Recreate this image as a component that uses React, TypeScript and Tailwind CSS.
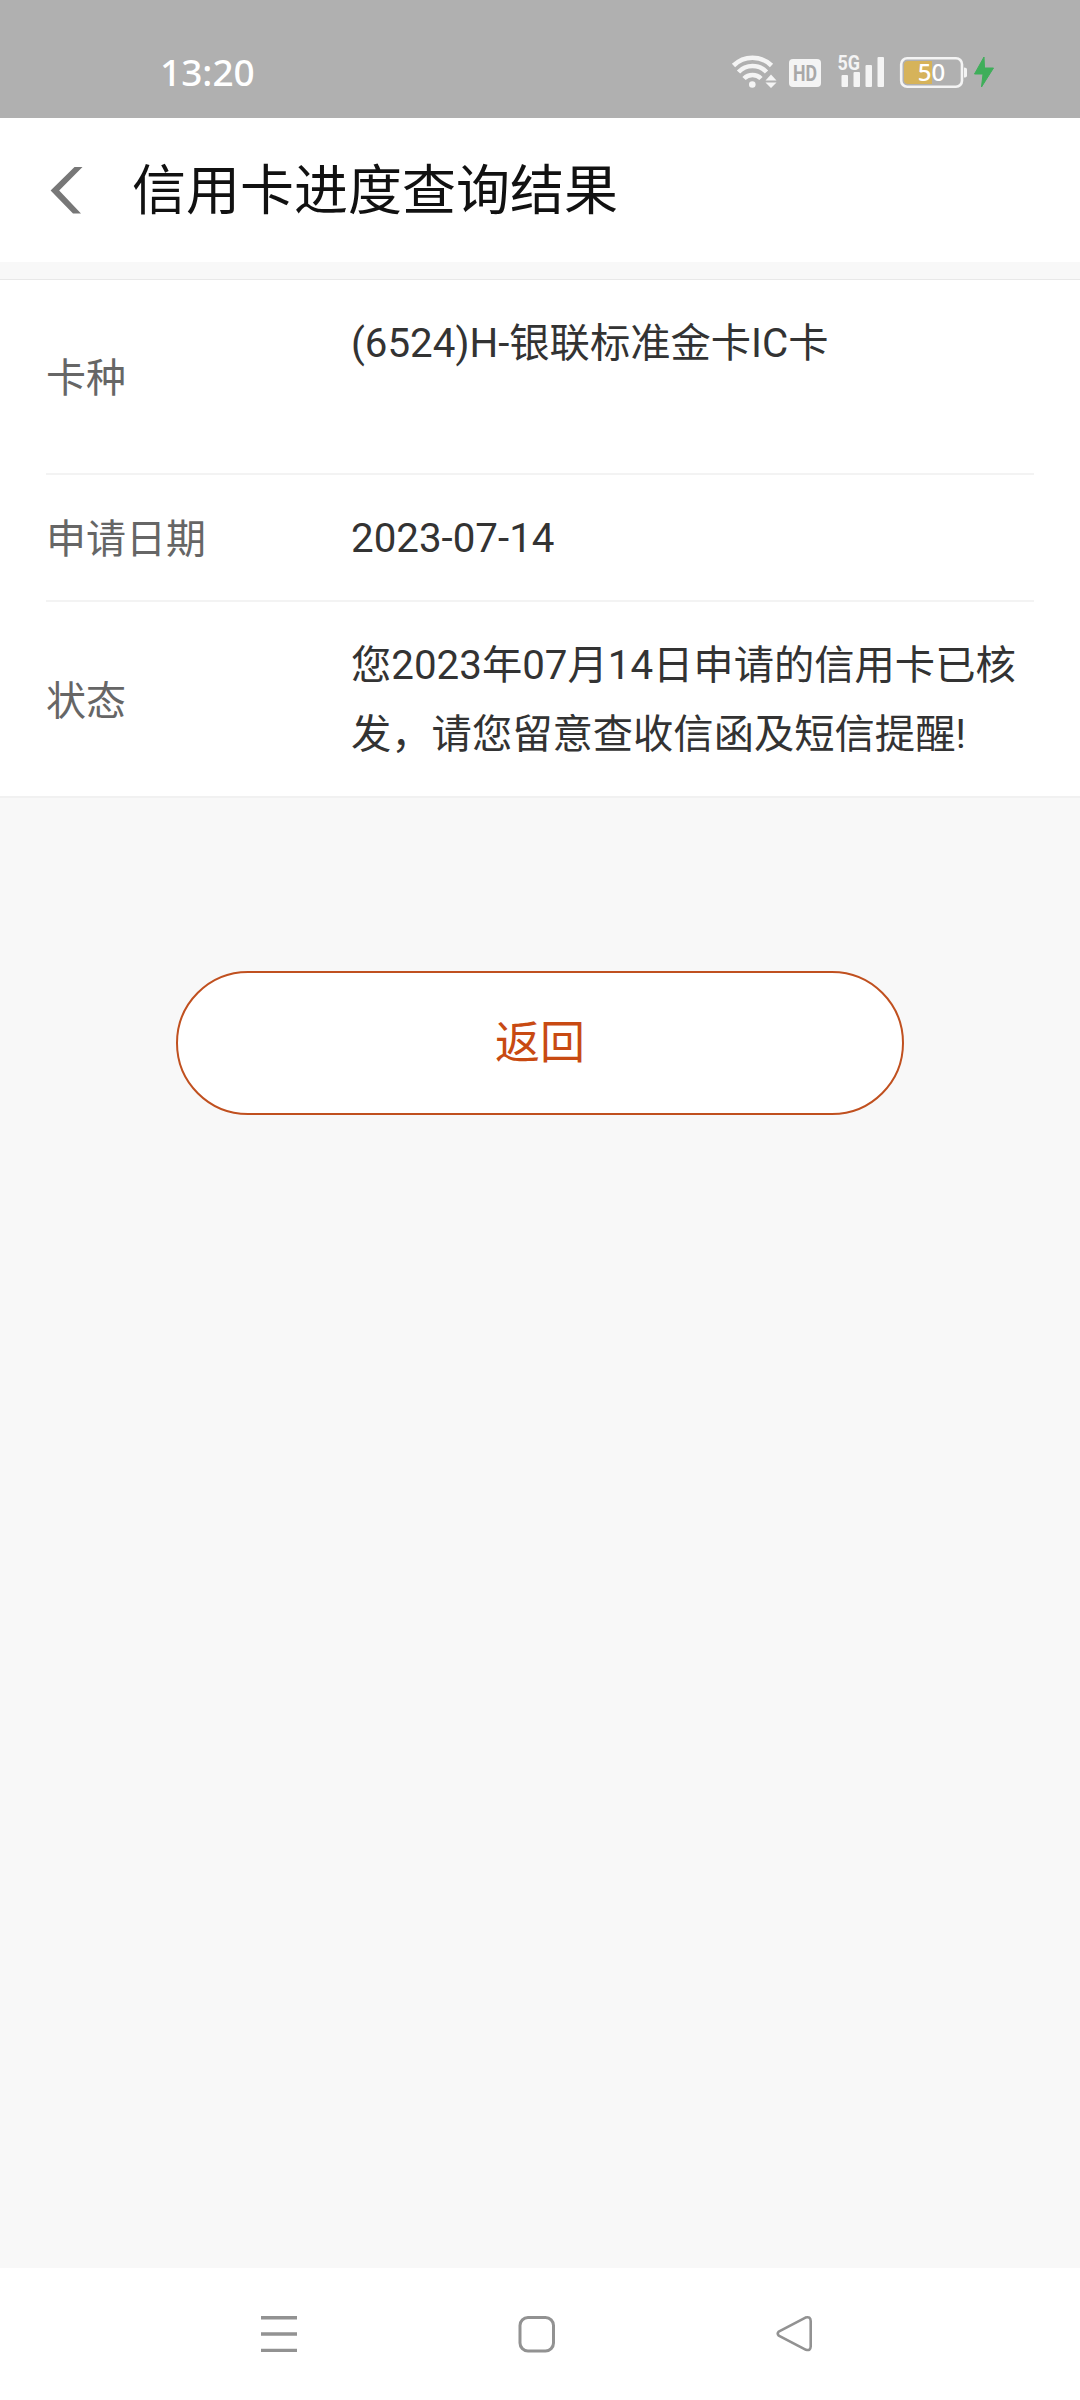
import React from 'react';

const ROWS = [
  { id: 'type', label: '卡种', value: '(6524)H-银联标准金卡IC卡', height: 'h-[195px]' },
  { id: 'date', label: '申请日期', value: '2023-07-14', height: 'h-[127px]' },
  { id: 'status', label: '状态', value: '您2023年07月14日申请的信用卡已核发，请您留意查收信函及短信提醒!', height: 'h-[194px]' },
];

const StatusIcons: React.FC = () => (
  <svg width="300" height="60" viewBox="0 0 300 60" fill="none">
    {/* wifi */}
    <g stroke="#f4f4f4" strokeWidth="4.6">
      <path d="M13.5 25.5a27 27 0 0 1 38 0" />
      <path d="M18.5 32a19.5 19.5 0 0 1 28 0" />
      <path d="M24 38.5a12 12 0 0 1 17 0" />
    </g>
    <circle cx="32.3" cy="44.5" r="3.3" fill="#f4f4f4" />
    <path d="M51 34.5l5.5 6h-11zM51 48l5.500-5.500h-11z" fill="#f4f4f4" />
    {/* HD */}
    <rect x="69" y="19" width="32" height="28" rx="4" fill="#f4f4f4" />
    <text x="85" y="40.5" textAnchor="middle" fontSize="21.5" fontWeight="700" textLength="24" lengthAdjust="spacingAndGlyphs" fill="#a8a8a8" className="font-[Roboto,sans-serif]">HD</text>
    {/* signal */}
    <text x="117.500" y="29.5" fontSize="20" fontWeight="700" textLength="22.5" lengthAdjust="spacingAndGlyphs" fill="#f4f4f4" className="font-[Roboto,sans-serif]">5G</text>
    <g fill="#f4f4f4">
      <rect x="121.5" y="35" width="6.5" height="12" rx="1" />
      <rect x="133.5" y="32" width="6.5" height="15" rx="1" />
      <rect x="145.5" y="25" width="6.5" height="22" rx="1" />
      <rect x="157.5" y="17" width="6.500" height="30" rx="1" />
    </g>
    {/* battery */}
    <path d="M188 21h24v23h-24q-4 0-4-4v-15q0-4 4-4z" fill="#d6b35a" />
    <rect x="181.2" y="18.2" width="60.8" height="28.6" rx="6" stroke="#f4f4f4" strokeWidth="2.6" />
    <path d="M244 27.5q3 0 3 2v6q0 2-3 2z" fill="#f4f4f4" />
    <text x="211.5" y="41" textAnchor="middle" fontSize="24" fontWeight="500" fill="#fff" className="font-['Noto_Sans',sans-serif]">50</text>
    <path d="M264 17l-9.5 17h8.5l-1.5 13 12-19h-9z" fill="#3fae5a" stroke="#3fae5a" strokeLinejoin="round" />
  </svg>
);

const StatusBar: React.FC = () => (
  <div className="flex h-[118px] items-start justify-between bg-[#b0b0b0] pl-[160px] pr-[60px] pt-[40px]">
    <span className="pt-[7px] font-['Noto_Sans',sans-serif] text-[37px] font-medium leading-[50px] text-white">13:20</span>
    <StatusIcons />
  </div>
);

const Header: React.FC = () => (
  <header className="flex h-[144px] items-center bg-white pl-[50px]">
    <svg width="34" height="48" viewBox="0 0 34 48">
      <path d="M24.5 1H32.5L9.2 24.500L31 47.500H23L0.6 24.500Z" fill="#777" />
    </svg>
    <h1 className="ml-[48px] pt-[3px] text-[54px] leading-none text-[#111]">信用卡进度查询结果</h1>
  </header>
);

const NavBar: React.FC = () => (
  <nav className="flex h-[132px] items-start justify-between bg-white pl-[260px] pr-[266px] pt-[47px]">
    <svg width="38" height="38" viewBox="0 0 38 38" fill="none" stroke="#929292" strokeWidth="3.4">
      <path d="M1 2.7h36M1 19h36M1 35.4h36" />
    </svg>
    <svg width="38" height="38" viewBox="0 0 38 38" fill="none" stroke="#929292" strokeWidth="3">
      <rect x="2" y="2.500" width="33.5" height="33.500" rx="8" />
    </svg>
    <svg width="38" height="38" viewBox="0 0 38 38" fill="none" stroke="#929292" strokeWidth="2.6" strokeLinejoin="round">
      <path d="M2.7 16.6L29.5 2.6Q34.5 1 34.7 6V31.5Q34.5 36 30 34.8L2.7 20.6Q0.8 18.6 2.7 16.6Z" />
    </svg>
  </nav>
);

const App: React.FC = () => {
  return (
    <div className="flex h-[2400px] w-[1080px] flex-col bg-[#f8f8f8] font-[Roboto,'Noto_Sans_CJK_SC',sans-serif]">
      <StatusBar />
      <Header />

      <main className="flex flex-1 flex-col items-center pt-[17px]">
        <section className="w-full border-t border-b-2 border-t-[#e8e8e8] border-b-[#f1f1f1] bg-white px-[46px]">
          {ROWS.map((row) => (
            <div
              key={row.id}
              className={`flex border-b-2 border-[#f3f3f3] pb-[25px] pt-[29px] last:border-b-0 ${row.height}`}
            >
              <div className="w-[305px] shrink-0 self-center text-[40px] leading-[69px] text-[#666]">{row.label}</div>
              <div className="w-[672px] text-[40.3px] leading-[69px] text-[#333]">{row.value}</div>
            </div>
          ))}
        </section>

        <button className="mt-[173px] h-[144px] w-[728px] rounded-full border-2 border-[#c0501f] bg-white text-[45px] leading-none text-[#c84a12]">
          返回
        </button>
      </main>

      <NavBar />
    </div>
  );
};

export default App;
